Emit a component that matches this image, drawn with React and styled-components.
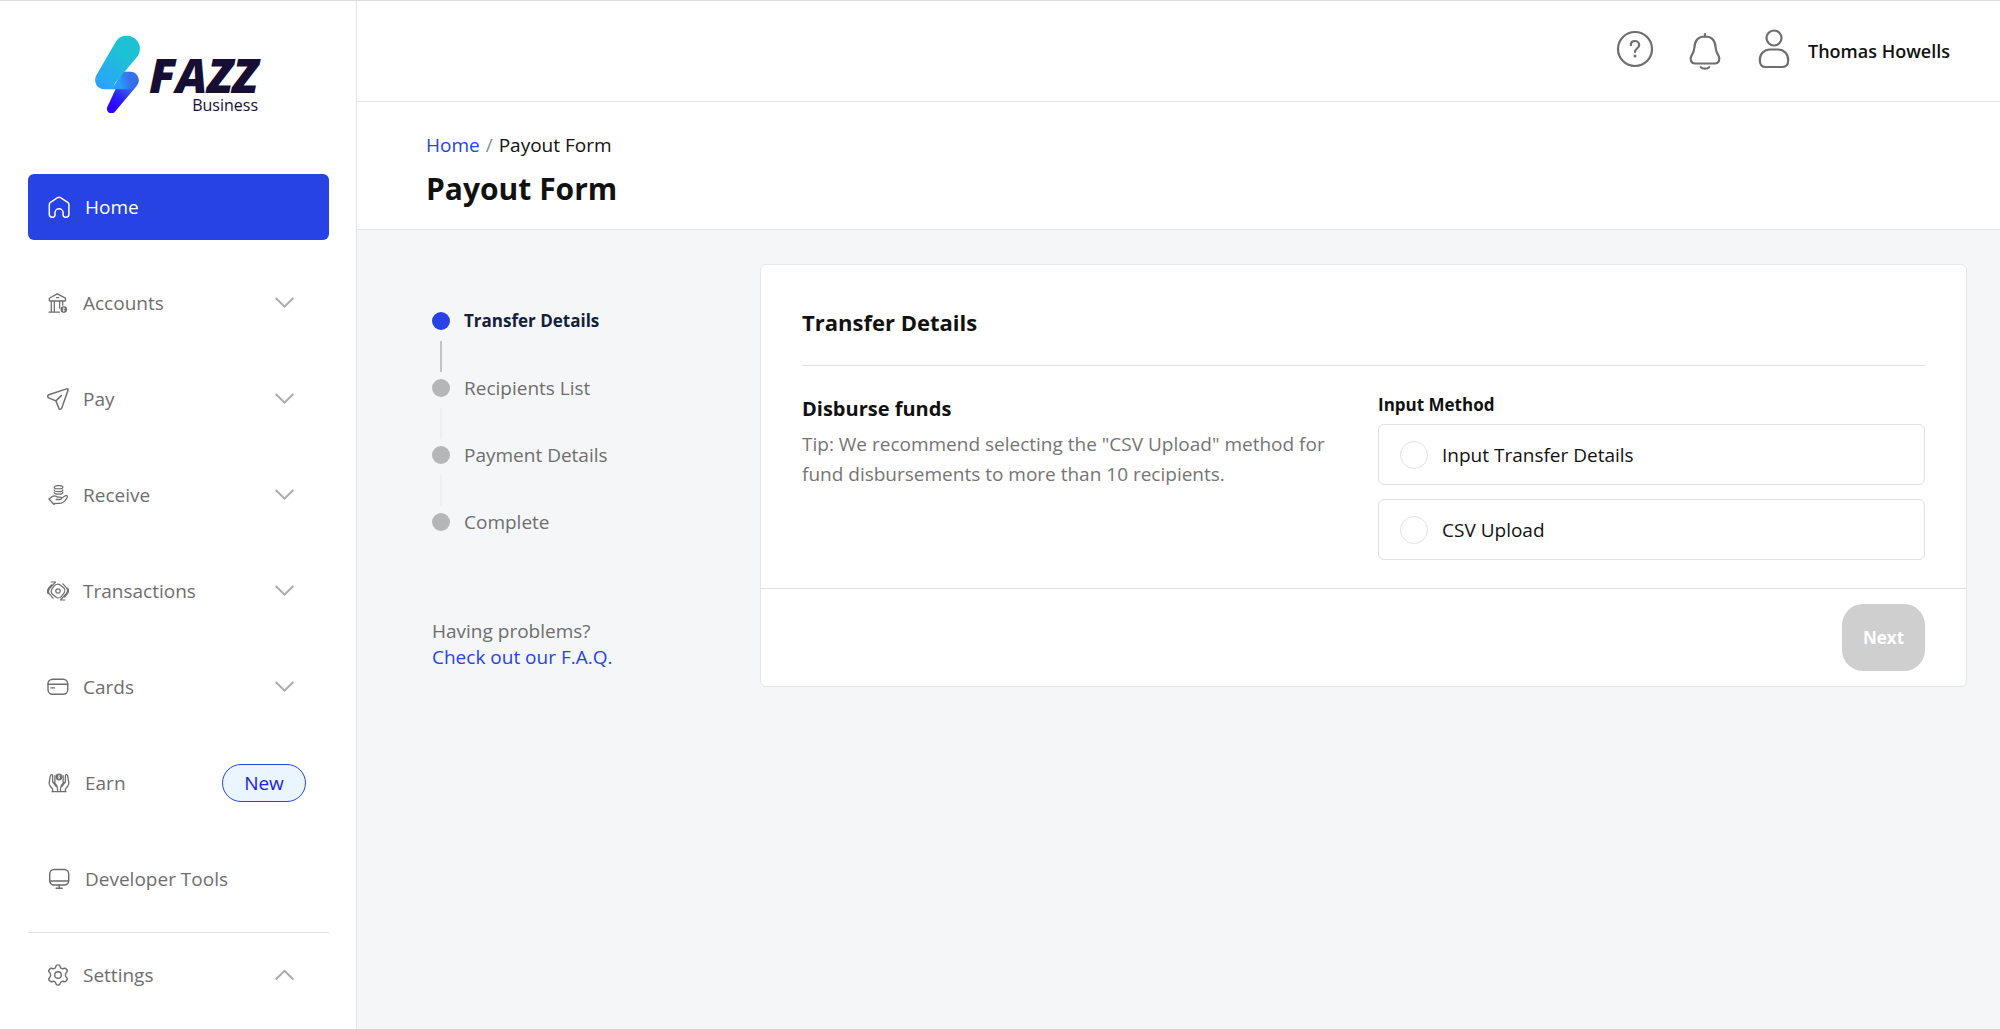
import React, { useState } from "react";
import styled, { createGlobalStyle } from "styled-components";

const GlobalStyle = createGlobalStyle`
  *, *::before, *::after {
    box-sizing: border-box;
  }

  body {
    margin: 0;
    background: #fff;
    color: #111;
    font-family: "Open Sans", "Noto Sans", sans-serif;
    font-size: 19px;
    line-height: 26px;
  }

  h1, h2, h3, p, ul, ol {
    margin: 0;
    padding: 0;
  }

  ul, ol {
    list-style: none;
  }

  a {
    color: #2743e3;
    text-decoration: none;
  }

  button {
    padding: 0;
    border: 0;
    background: none;
    color: inherit;
    font: inherit;
    cursor: pointer;
  }
`;

const Layout = styled.div`
  display: flex;
  min-height: 100vh;
  border-top: 1px solid #dedede;
`;

const Sidebar = styled.aside`
  flex: none;
  width: 357px;
  padding: 34px 27px 0 28px;
  border-right: 1px solid #e4e4e6;
`;

const Logo = styled.a`
  display: flex;
  justify-content: center;
  align-items: flex-end;
  gap: 8px;
  margin-bottom: 61px;
  padding-right: 4px;
  color: #170f33;
`;

const LogoText = styled.span`
  display: flex;
  flex-direction: column;
  align-items: flex-end;
  gap: 2px;
`;

const Wordmark = styled.span`
  font-size: 47px;
  font-style: italic;
  font-weight: 800;
  line-height: 40px;
`;

const LogoCaption = styled.span`
  font-size: 16px;
  font-weight: 500;
  line-height: 16px;
`;

const NavList = styled.ul`
  display: flex;
  flex-direction: column;
  gap: 30px;
`;

const NavDivider = styled.hr`
  height: 1px;
  margin: 20px 0 9px;
  border: 0;
  background: #dfe0e2;
`;

const NavLink = styled.a`
  display: flex;
  align-items: center;
  gap: 15px;
  height: 66px;
  padding: 0 23px 0 20px;
  border-radius: 6px;
  background: ${({ $active }) => ($active ? "#2743e3" : "transparent")};
  color: ${({ $active }) => ($active ? "#fff" : "#6e6e6e")};
  font-weight: 500;
`;

const NavToggle = styled.button`
  display: flex;
  align-items: center;
  gap: 15px;
  width: 100%;
  height: 66px;
  padding: 0 35px 0 20px;
  color: #6e6e6e;
  font-weight: 500;
  text-align: left;
`;

const NavIcon = styled.span`
  display: flex;
  justify-content: center;
  width: ${({ $wide }) => ($wide ? 22 : 20)}px;

  svg {
    flex: none;
  }
`;

const NavLabel = styled.span`
  flex: 1;
`;

const Badge = styled.span`
  width: 84px;
  padding: 5px 0;
  border: 1px solid #2743e3;
  border-radius: 20px;
  background: #ebf5ff;
  color: #2022dc;
  text-align: center;
`;

const Main = styled.div`
  display: flex;
  flex: 1;
  flex-direction: column;
  min-width: 0;
`;

const Header = styled.header`
  display: flex;
  justify-content: flex-end;
  align-items: center;
  height: 101px;
  padding: 0 50px 4px 0;
  border-bottom: 1px solid #e4e4e6;
  color: #6e6e6e;
`;

const HeaderButton = styled.button`
  display: flex;
  align-items: center;
  gap: 14px;
  margin-left: ${({ $gap }) => $gap}px;
`;

const UserName = styled.span`
  padding-top: 4px;
  color: #111;
  font-size: 18px;
  font-weight: 600;
`;

const TitleBar = styled.div`
  height: 128px;
  padding: 30px 69px 0;
  border-bottom: 1px solid #e4e4e6;
`;

const Breadcrumbs = styled.nav`
  display: flex;
  gap: 6px;
`;

const Separator = styled.span`
  color: #8c8c8c;
`;

const PageTitle = styled.h1`
  margin-top: 11px;
  font-size: 30px;
  line-height: 40px;
`;

const Content = styled.main`
  display: flex;
  flex: 1;
  align-items: flex-start;
  padding: 34px 33px 34px 75px;
  background: #f5f6f8;
`;

const StepsColumn = styled.div`
  flex: none;
  width: 328px;
  padding-top: 44px;
  color: #6e6e6e;
`;

const Step = styled.li`
  display: flex;
  align-items: center;
  gap: 14px;
  color: ${({ $current }) => ($current ? "#14213a" : "#6e6e6e")};
  font-size: ${({ $current }) => ($current ? 17 : 19)}px;
  font-weight: ${({ $current }) => ($current ? 700 : 400)};

  &::before {
    width: 18px;
    height: 18px;
    border-radius: 50%;
    background: ${({ $current }) => ($current ? "#2743e3" : "#b5b6b8")};
    content: "";
  }
`;

const StepLine = styled.li`
  width: 2px;
  height: 31px;
  margin: 7px 8px 3px;
  background: ${({ $done }) => ($done ? "#c2c3c5" : "#eeeff1")};
`;

const Help = styled.p`
  margin-top: 83px;
`;

const Card = styled.form`
  flex: 1;
  min-width: 0;
  border: 1px solid #e6e7e8;
  border-radius: 6px;
  background: #fff;
`;

const CardBody = styled.div`
  padding: 41px 41px 28px;
`;

const CardTitle = styled.h2`
  padding-bottom: 27px;
  border-bottom: 1px solid #e2e2e4;
  font-size: 22px;
  line-height: 32px;
`;

const Columns = styled.div`
  display: grid;
  grid-template-columns: 1fr 1fr;
  gap: 29px;
  padding-top: 26px;
`;

const SectionTitle = styled.h3`
  margin-top: 2px;
  font-size: 20px;
  line-height: 30px;
`;

const Tip = styled.p`
  margin-top: 5px;
  color: #757575;
  line-height: 30px;
`;

const Fieldset = styled.fieldset`
  min-width: 0;
  margin: 0;
  padding: 0;
  border: 0;
`;

const Legend = styled.legend`
  margin-bottom: 6px;
  padding: 0;
  font-size: 17px;
  font-weight: 700;
`;

const Option = styled.label`
  display: flex;
  align-items: center;
  gap: 14px;
  height: 61px;
  margin-bottom: 14px;
  padding: 0 21px;
  border: 1px solid #e2e2e4;
  border-radius: 6px;
  cursor: pointer;

  &:last-child {
    margin-bottom: 0;
  }
`;

const Radio = styled.input`
  width: 28px;
  height: 28px;
  margin: 0;
  border: 1px solid #e2e2e4;
  border-radius: 50%;
  background: #fff;
  appearance: none;

  &:checked {
    border: 8px solid #2743e3;
  }
`;

const CardFooter = styled.div`
  display: flex;
  justify-content: flex-end;
  padding: 15px 41px;
  border-top: 1px solid #e2e2e4;
`;

const NextButton = styled.button`
  width: 83px;
  height: 67px;
  border-radius: 21px;
  background: #2743e3;
  color: #fff;
  font-size: 17px;
  font-weight: 700;

  &:disabled {
    background: #cfcfcf;
    cursor: default;
  }
`;

const Icon = ({ size = 20, width = 1.2, children }) => (
  <svg
    width={size}
    height={size}
    viewBox={`0 0 ${size} ${size}`}
    fill="none"
    stroke="currentColor"
    strokeWidth={width}
    strokeLinecap="round"
    strokeLinejoin="round"
    aria-hidden="true"
  >
    {children}
  </svg>
);

const Bolt = () => (
  <svg width="46" height="78" viewBox="0 0 138 234" aria-hidden="true">
    <defs>
      <linearGradient id="boltTop" x1="0.6" y1="0.3" x2="0.15" y2="1">
        <stop offset="0" stopColor="#1cc2d3" />
        <stop offset="1" stopColor="#2ba1ff" />
      </linearGradient>
      <linearGradient id="boltBottom" x1="0.75" y1="0.1" x2="0.3" y2="0.95">
        <stop offset="0" stopColor="#3a6ce8" />
        <stop offset="0.35" stopColor="#3557ea" />
        <stop offset="0.7" stopColor="#2b1df5" />
        <stop offset="1" stopColor="#3000ff" />
      </linearGradient>
      <linearGradient id="boltFold" x1="0" y1="0.6" x2="1" y2="0.4">
        <stop offset="0.3" stopColor="#2a9cfb" />
        <stop offset="1" stopColor="#3a6ce8" stopOpacity="0" />
      </linearGradient>
    </defs>
    <path
      d="M84 110H105A26 26 0 0 1 125 153L61 229A13 13 0 0 1 38 214L65 155Z"
      fill="url(#boltBottom)"
    />
    <path
      d="M84 110H105A26 26 0 0 1 125 153L116 163H50Z"
      fill="url(#boltFold)"
    />
    <path
      d="M62 21A39 39 0 0 1 129 62Q127 65 124 68L61 143L52 163H28A28 28 0 0 1 4 121Z"
      fill="url(#boltTop)"
    />
  </svg>
);

const HomeIcon = () => (
  <Icon size={22} width={1.5}>
    <path d="M9.5 1.7a2.8 2.8 0 0 1 3 0l7.2 4.6a2.5 2.5 0 0 1 1.2 2.1v9.8a3 3 0 0 1-3 3h-.6a2.2 2.2 0 0 1-2.2-2.2v-2.2a4 4 0 0 0-8.1 0V19a2.2 2.2 0 0 1-2.2 2.2h-.5a3 3 0 0 1-3-3V8.4a2.5 2.5 0 0 1 1.2-2.1Z" />
  </Icon>
);

const AccountsIcon = () => (
  <Icon width={1.3}>
    <path d="M1.3 5.2 9.3.9l8.2 4.3v2.2a.6.6 0 0 1-.6.6H1.9a.6.6 0 0 1-.6-.6ZM8.4 4.6h2.2M3.3 8v11M6.3 8v11M11.6 8v7M14.7 8v4.2M1 19.2h10.5" />
    <circle cx="15.8" cy="16.6" r="3.3" fill="currentColor" stroke="none" />
    <path d="M16.7 15.5c-1.3-.8-2 .7-.9 1.1s.4 1.8-.9 1M15.8 14.7v3.8" stroke="#fff" strokeWidth="0.7" />
  </Icon>
);

const PayIcon = () => (
  <Icon size={22} width={1.5}>
    <path d="M19.6.9 1.8 6.8C.4 7.3.4 9.3 1.7 9.9l7.2 3 3 7.4c.6 1.2 2.3 1.1 2.8-.1L21 2.3c.3-.9-.5-1.7-1.4-1.4ZM8.9 12.9 14.3 7.6" />
  </Icon>
);

const ReceiveIcon = () => (
  <Icon width={1.3}>
    <ellipse cx="10.5" cy="2.2" rx="4.3" ry="1.6" />
    <path d="M6.2 4.9c0 2.2 8.6 2.2 8.6 0M6.2 7.500c0 2.200 8.600 2.200 8.600 0" />
    <path d="M1 14 4.500 11.300c2-1 3.500 0 5 .8h2.800c1.700 0 1.500 2.300 0 2.400H8.200M13.500 13.200l3.800-2.500c1.300-.7 2.500.2 1.900 1.500-1.400 2.800-3.300 5.400-6 5.900-2.800.4-5 .1-7 .6M1 14l5 5.500" />
  </Icon>
);

const TransactionsIcon = () => (
  <Icon size={22} width={1.2}>
    <rect x="5" y="5" width="12" height="12" rx="4" transform="rotate(38 11 11)" />
    <circle cx="11" cy="11" r="2.2" />
    <path d="M4.2 2h4.3L2.500 8.700a4.500 4.500 0 0 0 0 5.500l3.600 4M17.800 20h-4.300l6-6.700a4.500 4.500 0 0 0 0-5.500l-3.600-4M4.500 5 1.700 8.200a5 5 0 0 0-.5 5.500M17.500 17l2.800-3.200a5 5 0 0 0 .5-5.500" />
  </Icon>
);

const CardsIcon = () => (
  <Icon size={22} width={1.4}>
    <rect x="1" y="3.2" width="19.7" height="15" rx="4.5" />
    <path d="M1 8.2h19.7M4 11.9h3.4" />
  </Icon>
);

const EarnIcon = () => (
  <Icon size={22} width={1.3}>
    <circle cx="11" cy="5" r="3.4" fill="currentColor" stroke="none" />
    <path d="M11.900 3.900c-1.300-.7-2 .6-.9 1s.4 1.800-.9 1M11 3v3.800" stroke="#fff" strokeWidth="0.7" />
    <path d="M4.600 19.600v-2.400L2.100 13.800a4.200 4.200 0 0 1-.9-3.500L2.400 3.700c.3-1.600 2.200-1.300 2.200.2v6l3.700 4.700M4.600 9.900c2.300.4 4.900 4.200 4.900 6.800v2.900M6.900 10.200V3.600" />
    <path d="M17.400 19.600v-2.400l2.500-3.400a4.200 4.200 0 0 0 .9-3.500L19.600 3.700c-.3-1.600-2.200-1.300-2.200.2v6l-3.700 4.700M17.400 9.900c-2.300.4-4.900 4.200-4.900 6.800v2.900M15.100 10.200V3.600M4 19.700h14" />
  </Icon>
);

const ToolsIcon = () => (
  <Icon size={22} width={1.5}>
    <rect x="1.7" y="1.4" width="19" height="15.6" rx="4.5" />
    <path d="M1.9 13h18.6M11.2 17v3M8.2 20.2h6" />
  </Icon>
);

const SettingsIcon = () => (
  <Icon size={22} width={1.4}>
    <circle cx="11" cy="11" r="3.3" />
    <path d="M8.8 2.6C9.1.3 12.9.3 13.2 2.6c.3 1.8 1.9 2.6 3.4 1.9 2.2-1 4.8 2.3 3 3.8-1.6 1.4-1.6 4 0 5.4 1.8 1.5-.8 4.8-3 3.8-1.5-.7-3.1.1-3.4 1.9-.3 2.3-4.1 2.3-4.4 0-.3-1.8-1.9-2.6-3.4-1.9-2.2 1-4.8-2.3-3-3.8 1.6-1.4 1.6-4 0-5.4-1.8-1.5.8-4.8 3-3.8 1.5.7 3.1-.1 3.4-1.9Z" />
  </Icon>
);

const Chevron = ({ up }) => (
  <svg width="19" height="12" viewBox="0 0 19 12" fill="none" stroke="#ababab" strokeWidth="2" aria-hidden="true">
    <path d={up ? "M.7 10.5 9.5 1.8 18.3 10.5" : "M.7 1 9.5 9.7 18.3 1"} />
  </svg>
);

const HelpIcon = () => (
  <Icon size={38} width={2.2}>
    <circle cx="19" cy="19" r="17" />
    <path d="M14.8 15.2c0-5.7 8.4-5.4 8.4-.3 0 3.4-4.2 3.3-4.2 7.2" />
    <circle cx="19" cy="26" r="1.5" fill="currentColor" stroke="none" />
  </Icon>
);

const BellIcon = () => (
  <Icon size={42} width={2.2}>
    <path d="M21 6v3M21 8.500c-7.300 0-10.300 5-10.600 11-.2 4-1 5.500-3 8.400C5.600 31 7 35.500 11 35.500h20c4 0 5.400-4.500 3.600-7.600-2-2.900-2.800-4.400-3-8.400-.3-6-3.300-11-10.600-11ZM16.800 39.200c2 2 6.400 2 8.400 0" />
  </Icon>
);

const UserIcon = () => (
  <Icon size={40} width={2.2}>
    <circle cx="20" cy="9" r="7.5" />
    <path d="M5.800 31c0-6 4.200-10.500 10.200-10.500h8c6 0 10.200 4.500 10.200 10.500 0 4.500-2 7-5.700 7h-17c-3.700 0-5.700-2.500-5.700-7Z" />
  </Icon>
);

const menu = [
  { name: "Home", icon: HomeIcon, active: true },
  { name: "Accounts", icon: AccountsIcon, group: true },
  { name: "Pay", icon: PayIcon, group: true },
  { name: "Receive", icon: ReceiveIcon, group: true },
  { name: "Transactions", icon: TransactionsIcon, group: true },
  { name: "Cards", icon: CardsIcon, group: true },
  { name: "Earn", icon: EarnIcon, badge: "New" },
  { name: "Developer Tools", icon: ToolsIcon },
];

const steps = ["Transfer Details", "Recipients List", "Payment Details", "Complete"];

const methods = [
  { value: "manual", label: "Input Transfer Details" },
  { value: "csv", label: "CSV Upload" },
];

const MenuItem = ({ item }) => {
  const ItemIcon = item.icon;

  if (item.group) {
    return (
      <NavToggle type="button" aria-expanded={!!item.open}>
        <NavIcon>
          <ItemIcon />
        </NavIcon>
        <NavLabel>{item.name}</NavLabel>
        <Chevron up={item.open} />
      </NavToggle>
    );
  }

  return (
    <NavLink href="#" $active={item.active}>
      <NavIcon $wide>
        <ItemIcon />
      </NavIcon>
      <NavLabel>{item.name}</NavLabel>
      {item.badge && <Badge>{item.badge}</Badge>}
    </NavLink>
  );
};

const PayoutForm = () => {
  const [method, setMethod] = useState("");

  return (
    <Card onSubmit={(e) => e.preventDefault()}>
      <CardBody>
        <CardTitle>Transfer Details</CardTitle>
        <Columns>
          <div>
            <SectionTitle>Disburse funds</SectionTitle>
            <Tip>
              Tip: We recommend selecting the "CSV Upload" method for fund
              disbursements to more than 10 recipients.
            </Tip>
          </div>
          <Fieldset>
            <Legend>Input Method</Legend>
            {methods.map(({ value, label }) => (
              <Option key={value}>
                <Radio
                  type="radio"
                  name="method"
                  value={value}
                  checked={method === value}
                  onChange={() => setMethod(value)}
                />
                {label}
              </Option>
            ))}
          </Fieldset>
        </Columns>
      </CardBody>
      <CardFooter>
        <NextButton type="submit" disabled={!method}>Next</NextButton>
      </CardFooter>
    </Card>
  );
};

const App = () => (
  <>
    <GlobalStyle />
    <Layout>
      <Sidebar>
        <Logo href="#">
          <Bolt />
          <LogoText>
            <Wordmark>FAZZ</Wordmark>
            <LogoCaption>Business</LogoCaption>
          </LogoText>
        </Logo>
        <nav>
          <NavList>
            {menu.map((item) => (
              <li key={item.name}>
                <MenuItem item={item} />
              </li>
            ))}
          </NavList>
          <NavDivider />
          <MenuItem item={{ name: "Settings", icon: SettingsIcon, group: true, open: true }} />
        </nav>
      </Sidebar>

      <Main>
        <Header>
          <HeaderButton type="button" aria-label="Help">
            <HelpIcon />
          </HeaderButton>
          <HeaderButton type="button" aria-label="Notifications" $gap={30}>
            <BellIcon />
          </HeaderButton>
          <HeaderButton type="button" $gap={28}>
            <UserIcon />
            <UserName>Thomas Howells</UserName>
          </HeaderButton>
        </Header>
        <TitleBar>
          <Breadcrumbs aria-label="Breadcrumb">
            <a href="#">Home</a>
            <Separator>/</Separator>
            <span>Payout Form</span>
          </Breadcrumbs>
          <PageTitle>Payout Form</PageTitle>
        </TitleBar>
        <Content>
          <StepsColumn>
            <ol>
              {steps.map((step, i) => (
                <React.Fragment key={step}>
                  {i > 0 && <StepLine $done={i === 1} aria-hidden="true" />}
                  <Step $current={i === 0}>{step}</Step>
                </React.Fragment>
              ))}
            </ol>
            <Help>
              Having problems?
              <br />
              <a href="#">Check out our F.A.Q.</a>
            </Help>
          </StepsColumn>
          <PayoutForm />
        </Content>
      </Main>
    </Layout>
  </>
);

export default App;
